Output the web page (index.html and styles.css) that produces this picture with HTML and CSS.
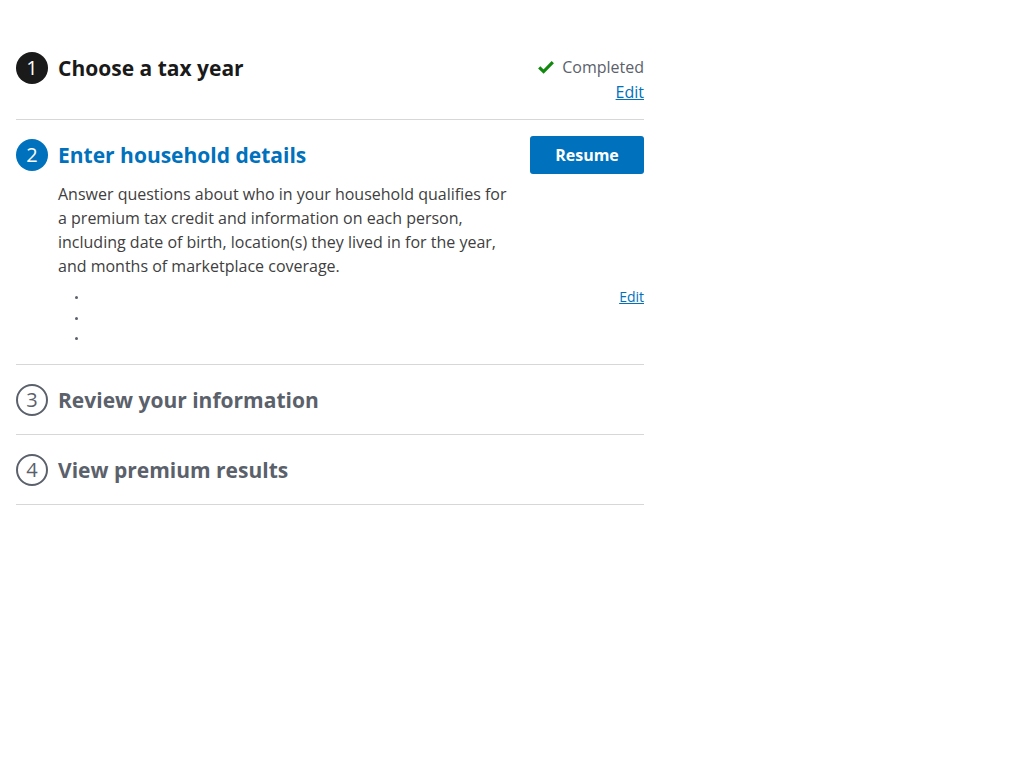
FILE: index.html
```html
<!DOCTYPE html>
<html lang="en">
<head>
<meta charset="utf-8">
<title>Steps</title>
<link rel="stylesheet" href="styles.css">
</head>
<body>
<main class="page">
  <ol class="steps">
    <li class="step step-done">
      <div class="step-main">
        <h2 class="step-title"><span class="num">1</span>Choose a tax year</h2>
      </div>
      <div class="step-side">
        <div class="status">
          <svg class="check" width="16" height="14" viewBox="0 0 16 14" aria-hidden="true"><path d="M1.2 7.4 L5.6 11.6 L14.8 2.2" fill="none" stroke="#12890e" stroke-width="3.2" stroke-linejoin="miter"/></svg>
          <span>Completed</span>
        </div>
        <a class="edit edit-done" href="#">Edit</a>
      </div>
    </li>
    <li class="step step-active">
      <div class="step-main">
        <h2 class="step-title"><span class="num">2</span>Enter household details</h2>
        <p class="desc">Answer questions about who in your household qualifies for a premium tax credit and information on each person, including date of birth, location(s) they lived in for the year, and months of marketplace coverage.</p>
        <div class="substeps">
          <ul class="subs">
            <li></li>
            <li></li>
            <li></li>
          </ul>
          <a class="edit edit-small" href="#">Edit</a>
        </div>
      </div>
      <div class="step-side">
        <button class="btn" type="button">Resume</button>
      </div>
    </li>
    <li class="step step-todo">
      <div class="step-main">
        <h2 class="step-title"><span class="num">3</span>Review your information</h2>
      </div>
    </li>
    <li class="step step-todo">
      <div class="step-main">
        <h2 class="step-title"><span class="num">4</span>View premium results</h2>
      </div>
    </li>
  </ol>
</main>
</body>
</html>
```
FILE: styles.css
```css
* { box-sizing: border-box; }
html, body { margin: 0; padding: 0; background: #fff; }
body {
  font-family: "Open Sans", "Liberation Sans", sans-serif;
  font-size: 16px;
  line-height: 24px;
  color: #323a45;
}
.page {
  width: 660px;
  padding: 36px 16px 0 16px;
}
.steps {
  list-style: none;
  margin: 0;
  padding: 0;
}
.step {
  display: flex;
  justify-content: space-between;
  align-items: flex-start;
  border-bottom: 1px solid #d6d7d9;
}
.step-done { padding: 16px 0 15px; }
.step-active { padding: 16px 0 15px; }
.step-todo { padding: 19px 0 18px; }
.step-main { flex: 1; min-width: 0; }
.step-title {
  display: flex;
  align-items: center;
  margin: 0;
  font-size: 21px;
  line-height: 32px;
  font-weight: 700;
  color: #1a1a1a;
}
.num {
  display: inline-flex;
  align-items: center;
  justify-content: center;
  width: 32px;
  height: 32px;
  border-radius: 50%;
  margin-right: 10px;
  font-size: 20px;
  font-weight: 400;
  flex: none;
  background: #1a1a1a;
  color: #fff;
}
.step-active .step-title { color: #0071bc; margin-top: 3px; }
.step-active .num { background: #0071bc; color: #fff; }
.step-todo .step-title { color: #5b616b; }
.step-todo .num {
  background: #fff;
  color: #5b616b;
  border: 2px solid #5b616b;
}
.step-side {
  display: flex;
  flex-direction: column;
  align-items: flex-end;
  padding-top: 3px;
}
.status {
  display: flex;
  align-items: center;
  gap: 8px;
  color: #5b616b;
}
.edit {
  color: #0071bc;
  text-decoration: underline;
}
.edit-done { margin-top: 1px; }
.desc {
  margin: 11px 0 0 42px;
  max-width: 460px;
  color: #404040;
}
.substeps {
  display: flex;
  justify-content: space-between;
  align-items: flex-start;
  margin-top: 9px;
}
.subs {
  margin: 0;
  padding: 0 0 0 72px;
  font-size: 9px;
  line-height: 20.5px;
  color: #5b616b;
  list-style: disc;
}
.subs li { height: 20.5px; }
.edit-small {
  font-size: 14px;
  line-height: 20px;
  margin-right: -114px;
}
.step-active .step-side { padding-top: 0; }
.btn {
  font-family: "Open Sans", "Liberation Sans", sans-serif;
  font-size: 16px;
  font-weight: 700;
  color: #fff;
  background: #0071bc;
  border: 0;
  border-radius: 3px;
  width: 114px;
  height: 38px;
  padding: 0;
}
```
